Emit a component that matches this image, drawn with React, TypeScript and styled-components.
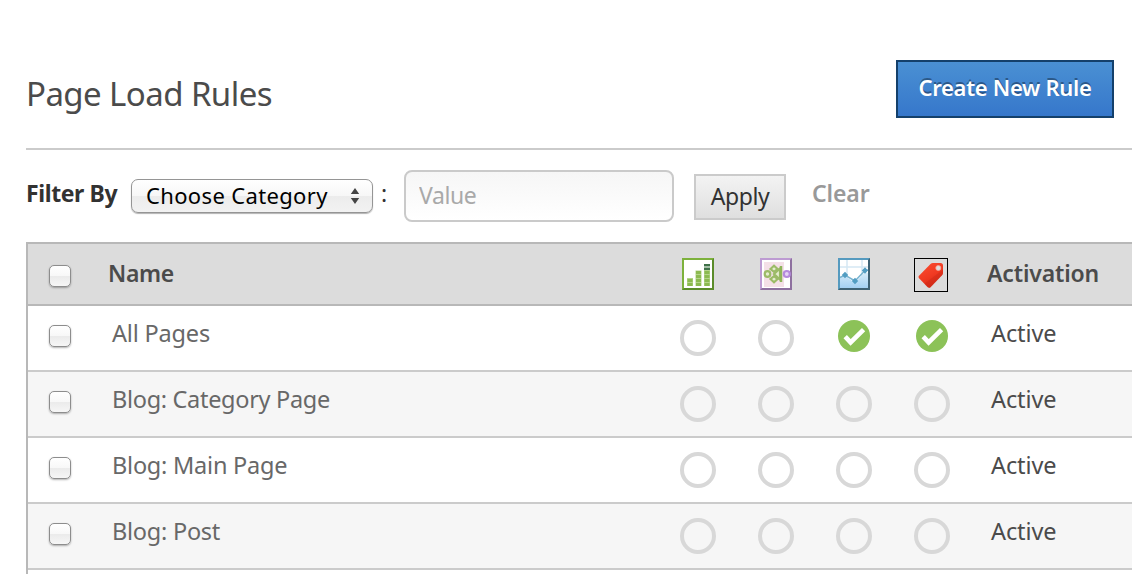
import React from 'react';
import styled, { createGlobalStyle } from 'styled-components';

const GlobalStyle = createGlobalStyle`
  * { box-sizing: border-box; }
  html, body { margin: 0; background: #fff; overflow: hidden; }
  body { font-family: "Noto Sans", "Open Sans", sans-serif; color: #4b4b4b; font-size: 23.5px; }
  button, input { font-family: inherit; margin: 0; }
`;

const Page = styled.main`
  width: 1132px;
  height: 574px;
  overflow: hidden;
  padding-left: 26px;
`;

const Header = styled.header`
  display: flex;
  justify-content: space-between;
  align-items: flex-start;
  height: 150px;
  padding: 60px 18px 0 0;
  border-bottom: 2px solid #cbcbcb;
`;

const Title = styled.h1`
  margin: 14px 0 0;
  font-size: 33px;
  font-weight: 400;
  line-height: 40px;
  letter-spacing: -0.57px;
  white-space: nowrap;
`;

const CreateButton = styled.button`
  width: 218px;
  height: 58px;
  padding: 0 0 5px;
  border: 2px solid #14406b;
  background: linear-gradient(#4a90d3, #3677cb);
  color: #fff;
  font-size: 22px;
  font-weight: 600;
  letter-spacing: -0.3px;
  white-space: nowrap;
  text-shadow: 0 -2px 0 rgba(0, 0, 0, 0.35);
`;

const FilterBar = styled.div`
  display: flex;
  align-items: flex-start;
  height: 92px;
  padding-top: 20px;
`;

const FilterText = styled.span<{ $color: string; $width: number; $weight?: number; $spacing?: number }>`
  flex: none;
  width: ${p => p.$width}px;
  padding-top: 7px;
  color: ${p => p.$color};
  font-weight: ${p => p.$weight ?? 400};
  font-size: 23px;
  line-height: 32px;
  letter-spacing: ${p => p.$spacing ?? 0}px;
  white-space: nowrap;
`;

const CategorySelect = styled.button`
  display: flex;
  align-items: center;
  justify-content: space-between;
  width: 242px;
  height: 34px;
  margin: 9px 8px 0 0;
  padding: 0 12px 2px 14px;
  border: 1.5px solid #959595;
  border-radius: 7px;
  background: linear-gradient(#fff 0%, #f7f7f7 50%, #ececec 51%, #f2f2f2 100%);
  box-shadow: 0 1px 1px rgba(0, 0, 0, 0.3);
  color: #000;
  font-size: 22px;
  line-height: 30px;
  letter-spacing: 0.35px;
  white-space: nowrap;
  svg { position: relative; top: 1px; }
`;

const ValueInput = styled.input`
  width: 270px;
  height: 52px;
  padding: 0 12px 3px 13px;
  border: 2px solid #cacaca;
  border-radius: 8px;
  background: linear-gradient(#f6f6f6, #fff);
  font-size: 23px;
  letter-spacing: -0.4px;
  &::placeholder { color: #a9a9a9; opacity: 1; }
`;

const ApplyButton = styled.button`
  width: 92px;
  height: 46px;
  margin: 4px 26px 0 20px;
  padding: 0 0 3px;
  border: 2px solid #cbcbcb;
  background: linear-gradient(#f3f3f3, #dfdfdf);
  color: #323232;
  font-size: 23px;
  letter-spacing: -0.4px;
`;

const Table = styled.div`
  border: solid #b8b8b8;
  border-width: 2px 0 0 2px;
`;

const Row = styled.div<{ $tone?: 'head' | 'alt' }>`
  display: grid;
  grid-template-columns: 81px 550px repeat(4, 78px) 161px;
  height: ${p => (p.$tone === 'head' ? 62 : 66)}px;
  border-bottom: 2px solid ${p => (p.$tone === 'head' ? '#b8b8b8' : '#cbcbcb')};
  background: ${p => (p.$tone === 'head' ? '#dcdcdc' : p.$tone === 'alt' ? '#f6f6f6' : '#fff')};
`;

const CheckCell = styled.div<{ $top: number }>`
  padding: ${p => p.$top}px 0 0 21px;
`;

const Checkbox = styled.input`
  display: block;
  appearance: none;
  width: 22px;
  height: 22px;
  margin: 0;
  border: 1.5px solid #8d8d8d;
  border-radius: 5px;
  background: linear-gradient(#fff 0%, #f8f8f8 48%, #ebebeb 52%, #f6f6f6 100%);
  box-shadow: 0 1px 2px rgba(0, 0, 0, 0.3);
`;

const HeadText = styled.div<{ $indent?: number; $spacing: number }>`
  margin-left: -1px;
  padding-left: ${p => p.$indent ?? 0}px;
  font-size: 23px;
  font-weight: 600;
  line-height: 58px;
  letter-spacing: ${p => p.$spacing}px;
  white-space: nowrap;
`;

const CellText = styled.div<{ $indent: number; $color: string; $spacing: number }>`
  padding-left: ${p => p.$indent}px;
  color: ${p => p.$color};
  font-size: 23.5px;
  line-height: 54px;
  letter-spacing: ${p => p.$spacing}px;
  white-space: nowrap;
`;

const IconCell = styled.div<{ $framed?: boolean }>`
  display: flex;
  justify-content: center;
  align-items: flex-start;
  padding: 14px ${p => (p.$framed ? 2 : 0)}px 0 0;
`;

const EmptyStatus = styled.span`
  width: 36px;
  height: 36px;
  border: 4px solid #d8d8d8;
  border-radius: 50%;
`;

const ActiveStatus = () => (
  <svg width="32" height="32" viewBox="0 0 32 32">
    <circle cx="16" cy="16" r="16" fill="#8cc258" />
    <path d="M7.2 16.6 L12.6 22.4 L25.6 9.6" fill="none" stroke="#fff" strokeWidth="4.6" />
  </svg>
);

const Arrows = () => (
  <svg width="10" height="18" viewBox="0 0 10 18">
    <path d="M5 1 L9.2 7 H0.8 Z M5 17 L9.2 11 H0.8 Z" fill="#444" />
  </svg>
);

const AnalyticsIcon = () => (
  <svg width="32" height="32" viewBox="0 0 32 32">
    <rect width="32" height="32" fill="#5b8c2a" />
    <path d="M0 0 H32 L30 2 H2 V30 L0 32 Z" fill="#7db13c" />
    <rect x="2" y="2" width="28" height="28" fill="#fff" />
    <g strokeWidth="6" fill="none" stroke="#b5d48a">
      <path d="M8 20 V28 M16.5 12.5 V28 M25 12 V28" />
    </g>
    <g strokeWidth="5" strokeDasharray="3 1" fill="none" stroke="#8cba50">
      <path d="M8 28 V20.5 M16.5 28 V13 M25 28 V12" />
    </g>
    <path d="M22 6 H28 V8.5 H22 Z M22 9.5 H28 V12 H22 Z" fill="#3f7048" />
    <path d="M22 8.5 H28 V9.5 H22 Z" fill="#a8c5a8" />
  </svg>
);

const TargetIcon = () => (
  <svg width="32" height="32" viewBox="0 0 32 32">
    <rect width="32" height="32" fill="#8e709f" />
    <path d="M0 0 H32 L30 2 H2 V30 L0 32 Z" fill="#bd9bd2" />
    <rect x="2" y="2" width="28" height="28" fill="#fff" />
    <rect x="4" y="4" width="20" height="25" fill="#f4e0e7" />
    <g fill="#e5edcf" stroke="#9cbb67" strokeWidth="2.2">
      <circle cx="7.5" cy="16" r="2.8" />
      <path d="M10.5 11 L14 7.8 L17.5 11 L14 13.8 Z" />
      <path d="M10.5 21 L14 24.2 L17.5 21 L14 18.2 Z" />
      <path d="M14 16 L20 10.5 V21.5 Z" />
    </g>
    <path d="M21 8 V24" stroke="#8fb45a" strokeWidth="2.5" />
    <circle cx="26.8" cy="16" r="3" fill="#e4d3f3" stroke="#b58add" strokeWidth="2.2" />
  </svg>
);

const TrendIcon = () => (
  <svg width="32" height="32" viewBox="0 0 32 32">
    <defs>
      <linearGradient id="trendFill" x1="0" y1="0" x2="0" y2="1">
        <stop offset="0" stopColor="#d8edfa" />
        <stop offset="1" stopColor="#a4d0f2" />
      </linearGradient>
    </defs>
    <rect width="32" height="32" fill="#3f6274" />
    <path d="M0 0 H32 L30 2 H2 V30 L0 32 Z" fill="#559abf" />
    <rect x="2" y="2" width="28" height="28" fill="#fff" />
    <path d="M2 9 H30 M9 2 V20 M24 2 V20" stroke="#d5e8f3" strokeWidth="1.5" />
    <path d="M2 20 L7 18 L17 25 L27 14 L30 15 V30 H2 Z" fill="url(#trendFill)" />
    <path d="M2 19.5 L7 17 L17 23 L27 12.5 L30 12" fill="none" stroke="#78b3d0" strokeWidth="1.5" />
    <path d="M7 13.8 L10.2 17 L7 20.2 L3.8 17 Z M17 19.8 L20.2 23 L17 26.2 L13.8 23 Z M27 9.3 L30 12.5 L27 15.7 L23.8 12.5 Z" fill="#529dc2" />
  </svg>
);

const TagIcon = () => (
  <svg width="34" height="34" viewBox="0 0 34 34">
    <defs>
      <linearGradient id="tagFill" x1="0" y1="0" x2="0.5" y2="1">
        <stop offset="0" stopColor="#fb5034" />
        <stop offset="0.6" stopColor="#f03a22" />
        <stop offset="1" stopColor="#d62c18" />
      </linearGradient>
    </defs>
    <rect x="0.5" y="0.5" width="33" height="33" fill="none" stroke="#000" />
    <path d="M16.5 6 Q17.5 5 19 5 H26.5 Q29 5 29 7.5 V15 Q29 16.2 28 17.3 L16.5 29.2 Q15 30.5 13.5 29 L4.8 20 Q4 18.8 5 17.7 Z" fill="url(#tagFill)" />
    <path d="M10.5 25.8 L29 11.5 V15 Q29 16.2 28 17.3 L16.5 29.2 Q15 30.5 13.5 29 Z" fill="#c52413" opacity="0.35" />
    <circle cx="24.3" cy="10" r="2.5" fill="#dedede" stroke="#f7a699" strokeWidth="0.8" />
  </svg>
);

const rules = [
  { name: 'All Pages', spacing: -0.18, status: [false, false, true, true] },
  { name: 'Blog: Category Page', spacing: -0.31, status: [false, false, false, false] },
  { name: 'Blog: Main Page', spacing: -0.23, status: [false, false, false, false] },
  { name: 'Blog: Post', spacing: -0.25, status: [false, false, false, false] },
];

export default function App() {
  return (
    <Page>
      <GlobalStyle />
      <Header>
        <Title>Page Load Rules</Title>
        <CreateButton>Create New Rule</CreateButton>
      </Header>
      <FilterBar>
        <FilterText $color="#323232" $width={105} $weight={700} $spacing={-0.4}>Filter By</FilterText>
        <CategorySelect>Choose Category<Arrows /></CategorySelect>
        <FilterText $color="#323232" $width={23}>:</FilterText>
        <ValueInput placeholder="Value" />
        <ApplyButton>Apply</ApplyButton>
        <FilterText $color="#999" $width={80} $weight={600} $spacing={-0.1}>Clear</FilterText>
      </FilterBar>
      <Table>
        <Row $tone="head">
          <CheckCell $top={21}><Checkbox type="checkbox" /></CheckCell>
          <HeadText $spacing={-0.3}>Name</HeadText>
          <IconCell><AnalyticsIcon /></IconCell>
          <IconCell><TargetIcon /></IconCell>
          <IconCell><TrendIcon /></IconCell>
          <IconCell $framed><TagIcon /></IconCell>
          <HeadText $indent={17} $spacing={-0.15}>Activation</HeadText>
        </Row>
        {rules.map((rule, i) => (
          <Row key={rule.name} $tone={i % 2 ? 'alt' : undefined}>
            <CheckCell $top={19}><Checkbox type="checkbox" /></CheckCell>
            <CellText $indent={3} $color="#686868" $spacing={rule.spacing}>{rule.name}</CellText>
            {rule.status.map((on, j) => (
              <IconCell key={j}>{on ? <ActiveStatus /> : <EmptyStatus />}</IconCell>
            ))}
            <CellText $indent={20} $color="#4b4b4b" $spacing={-0.1}>Active</CellText>
          </Row>
        ))}
        <Row />
      </Table>
    </Page>
  );
}
